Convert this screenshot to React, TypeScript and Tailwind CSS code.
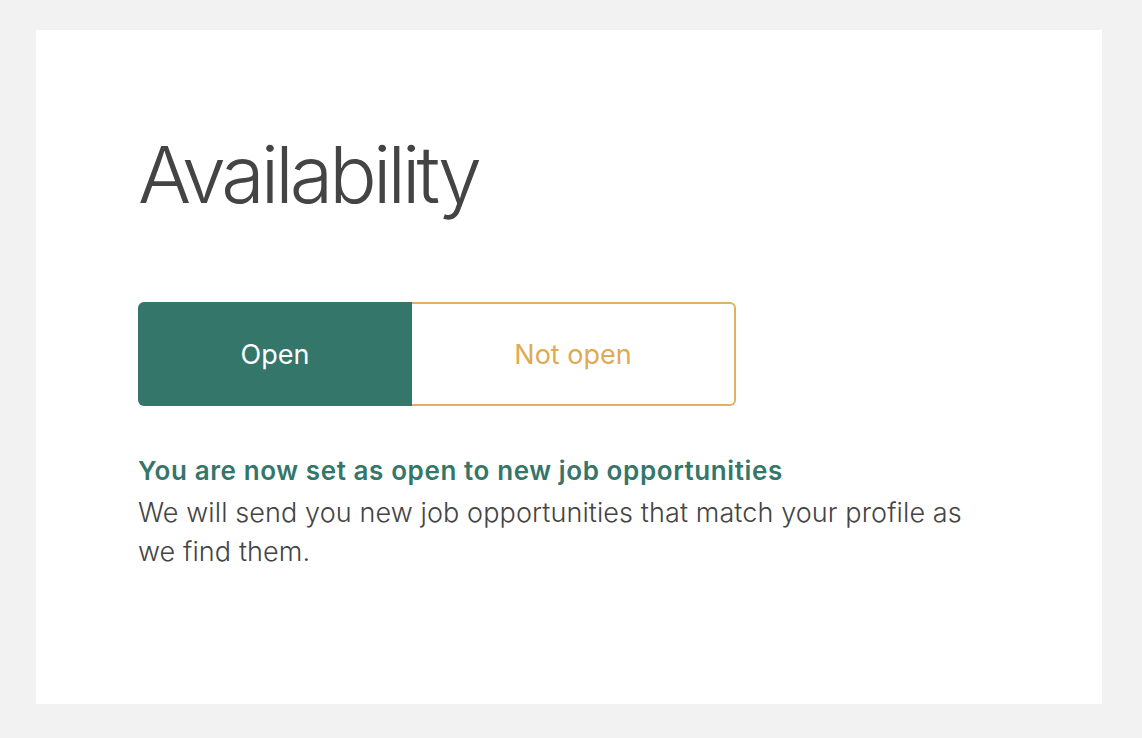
import React from "react";

export default function App() {
  return (
    <div
      className="min-h-[738px] w-full bg-[#f2f2f2] pt-[30px] pl-[36px] pr-[40px] pb-[34px]"
      style={{ fontFamily: "Inter, 'Noto Sans', sans-serif" }}
    >
      <div className="bg-white w-[1066px] h-[674px] pl-[102px] pt-[104px]">
        <h1 className="text-[79px] leading-[80px] font-light text-[#444444] tracking-[-3.9px]">
          Availability
        </h1>
        <div className="mt-[88px] flex h-[104px] w-[598px]">
          <button className="w-[274px] h-full bg-[#34766a] text-white text-[27px] rounded-l-[6px] pt-[2px]">
            Open
          </button>
          <button className="flex-1 h-full bg-white text-[#e0aa52] text-[27px] border-2 border-l-0 border-[#e3b062] rounded-r-[6px] pt-[2px]">
            Not open
          </button>
        </div>
        <div className="mt-[49px] w-[840px]">
          <p className="text-[26px] leading-[32px] font-semibold text-[#34766a] tracking-[0.6px]">
            You are now set as open to new job opportunities
          </p>
          <p className="mt-[6px] text-[27px] leading-[39px] font-light text-[#444444] w-[836px] tracking-[0.1px]">
            We will send you new job opportunities that match your profile as we find them.
          </p>
        </div>
      </div>
    </div>
  );
}
